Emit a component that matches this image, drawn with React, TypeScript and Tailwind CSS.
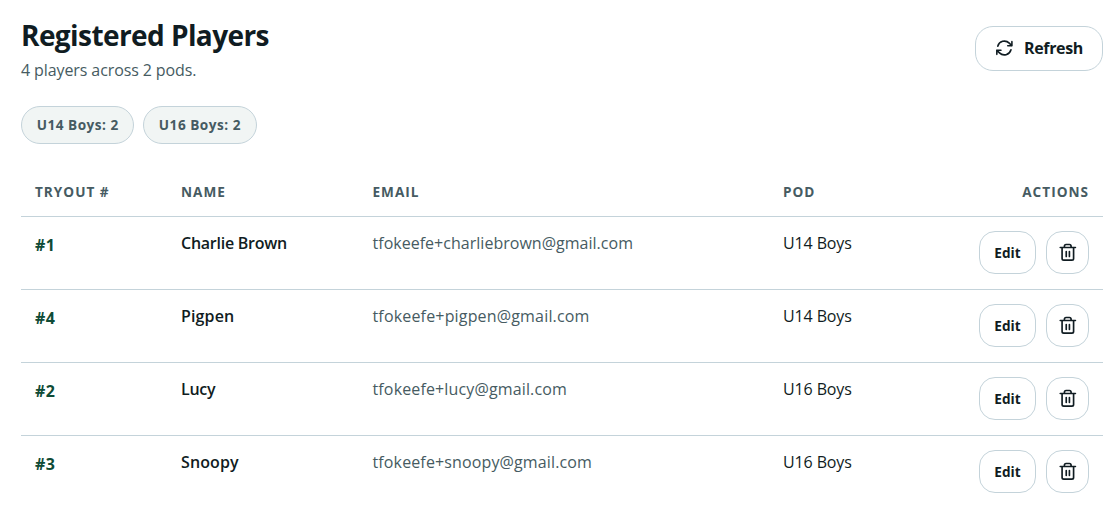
const PODS = [
  { name: "U14 Boys", count: 2 },
  { name: "U16 Boys", count: 2 },
];

const PLAYERS = [
  { number: 1, name: "Charlie Brown", email: "tfokeefe+charliebrown@gmail.com", pod: "U14 Boys", nameClass: "tracking-[-0.25px]", emailClass: "tracking-[0.02px]" },
  { number: 4, name: "Pigpen", email: "tfokeefe+pigpen@gmail.com", pod: "U14 Boys", nameClass: "tracking-[0.15px]", emailClass: "tracking-[0.17px]" },
  { number: 2, name: "Lucy", email: "tfokeefe+lucy@gmail.com", pod: "U16 Boys", nameClass: "tracking-[-0.25px]", emailClass: "tracking-[0.14px]" },
  { number: 3, name: "Snoopy", email: "tfokeefe+snoopy@gmail.com", pod: "U16 Boys", nameClass: "tracking-[0.1px]", emailClass: "tracking-[0.13px]" },
];

function RefreshIcon() {
  return (
    <svg
      className="-ml-px"
      width="20"
      height="20"
      viewBox="0 0 24 24"
      fill="none"
      stroke="currentColor"
      strokeWidth="1.9"
      strokeLinecap="round"
      strokeLinejoin="round"
    >
      <path d="M16.500 9.348h4.992V4.356M3.400 19.644v-4.992h4.992M3.400 14.652l3.181 3.183a8.25 8.25 0 0 0 13.803-3.7M4.500 9.865a8.25 8.25 0 0 1 13.803-3.7l3.181 3.182" />
    </svg>
  );
}

function TrashIcon() {
  return (
    <svg
      width="20"
      height="20"
      viewBox="0 0 24 24"
      fill="none"
      stroke="currentColor"
      strokeWidth="2"
      strokeLinecap="round"
      strokeLinejoin="round"
    >
      <path d="M2.700 6.600h18.200M7.700 6.600V5a2 2 0 0 1 2-2h4a2 2 0 0 1 2 2V6.600M4.900 6.600v13.200a2 2 0 0 0 2 2h9.800a2 2 0 0 0 2-2V6.600M9.900 11.400v6M13.700 11.400v6" />
    </svg>
  );
}

export default function App() {
  return (
    <main className="h-[522px] overflow-hidden bg-white pt-[18px] pr-[17px] pl-[21px] font-['Open_Sans',sans-serif] text-base text-[#101c22]">
      {/* Heading */}
      <header className="flex h-[88px] items-start justify-between">
        <div>
          <h1 className="text-[28px] leading-[35px] font-bold tracking-[-0.58px] whitespace-nowrap">
            Registered Players
          </h1>
          <p className="mt-[5px] leading-6 tracking-[-0.1px] text-[#465b62]">
            4 players across 2 pods.
          </p>
        </div>
        <button className="mt-2 flex h-[45px] w-32 items-center gap-2.5 rounded-[18px] border border-[#c4d3da] pb-0.5 pl-[19px] font-bold tracking-[-0.35px]">
          <RefreshIcon />
          Refresh
        </button>
      </header>

      {/* Pod counts */}
      <div className="flex gap-[8.8px]">
        {PODS.map((pod) => (
          <span
            key={pod.name}
            className="flex h-[38px] w-[113.4px] items-center justify-center rounded-full border border-[#c4d3da] bg-[#f1f5f4] text-[13.6px] font-bold tracking-[0.5px] whitespace-nowrap text-[#465b62]"
          >
            {pod.name}: {pod.count}
          </span>
        ))}
      </div>

      {/* Players */}
      <table className="mt-[23px] w-full table-fixed border-collapse text-left">
        <colgroup>
          <col className="w-[146px]" />
          <col className="w-[191.500px]" />
          <col className="w-[410.500px]" />
          <col className="w-[160px]" />
          <col />
        </colgroup>
        <thead>
          <tr className="h-[49px] border-b border-[#c4d3da] text-[13.6px] tracking-[1px] text-[#465b62]">
            <th className="px-3.5 pt-0.5">TRYOUT #</th>
            <th className="px-3.5 pt-0.5">NAME</th>
            <th className="px-3.5 pt-0.5">EMAIL</th>
            <th className="px-3.5 pt-0.5">POD</th>
            <th className="px-3.5 pt-0.5 text-right">ACTIONS</th>
          </tr>
        </thead>
        <tbody>
          {PLAYERS.map((player) => (
            <tr
              key={player.number}
              className="h-[73px] border-b border-[#c4d3da] align-top leading-6 whitespace-nowrap last:border-b-0"
            >
              <td className="px-3.5 pt-4 font-bold tracking-[0.4px] text-[#0f4b36]">
                #{player.number}
              </td>
              <td className={`px-3.5 pt-3.5 font-semibold ${player.nameClass}`}>
                {player.name}
              </td>
              <td className={`px-3.5 pt-3.5 text-[#465b62] ${player.emailClass}`}>
                {player.email}
              </td>
              <td className="px-3.5 pt-3.5 tracking-[-0.12px]">{player.pod}</td>
              <td className="px-3.5 pt-3.5">
                <div className="flex justify-end gap-2.5">
                  <button className="h-[43px] w-[57px] rounded-2xl border border-[#c4d3da] pt-0.5 text-[13.6px] font-bold">
                    Edit
                  </button>
                  <button
                    aria-label="Delete player"
                    className="flex h-[43px] w-[43px] items-center justify-center rounded-2xl border border-[#c4d3da]"
                  >
                    <TrashIcon />
                  </button>
                </div>
              </td>
            </tr>
          ))}
        </tbody>
      </table>
    </main>
  );
}
